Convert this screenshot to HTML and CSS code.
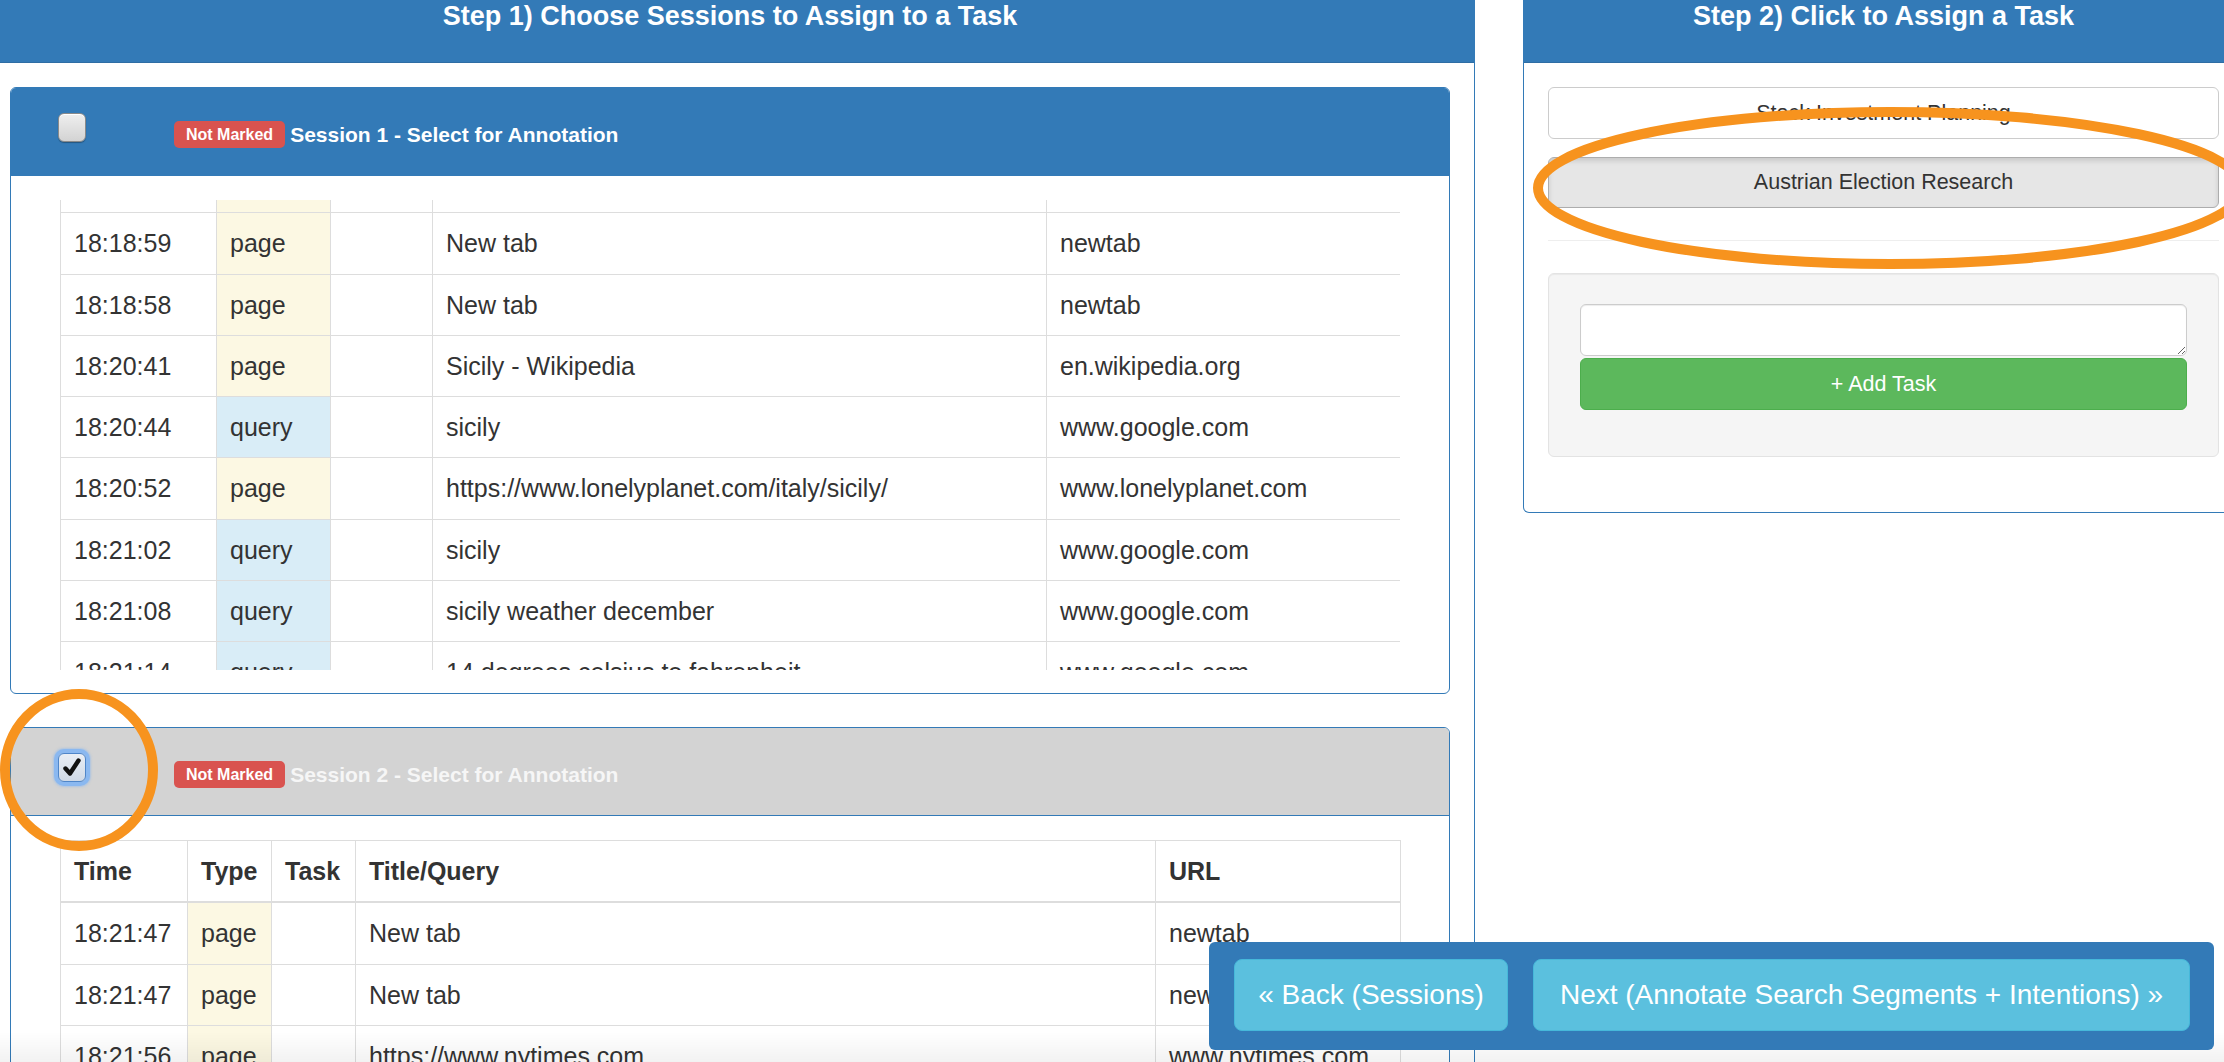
FILE: index.html
```html
<!DOCTYPE html>
<html lang="en">
<head>
<meta charset="utf-8">
<title>Assign Sessions to Tasks</title>
<link rel="stylesheet" href="styles.css">
</head>
<body>
<div class="row">
  <section class="step-panel step-left">
    <div class="step-heading"><h3>Step 1) Choose Sessions to Assign to a Task</h3></div>
    <div class="step-body">
      <div class="session">
        <div class="session-heading">
          <span class="cb"></span>
          <span class="label-group"><span class="badge">Not Marked</span><span class="session-title">Session 1 - Select for Annotation</span></span>
        </div>
        <div class="session-body">
          <div class="scroll-box">
            <table class="log log-s1">
              <colgroup><col class="s1-c1"><col class="s1-c2"><col class="s1-c3"><col class="s1-c4"><col class="s1-c5"></colgroup>
              <tbody>
                <tr><td>18:18:57</td><td class="page">page</td><td></td><td>New tab</td><td>newtab</td></tr>
                <tr><td>18:18:59</td><td class="page">page</td><td></td><td>New tab</td><td>newtab</td></tr>
                <tr><td>18:18:58</td><td class="page">page</td><td></td><td>New tab</td><td>newtab</td></tr>
                <tr><td>18:20:41</td><td class="page">page</td><td></td><td>Sicily - Wikipedia</td><td>en.wikipedia.org</td></tr>
                <tr><td>18:20:44</td><td class="query">query</td><td></td><td>sicily</td><td>www.google.com</td></tr>
                <tr><td>18:20:52</td><td class="page">page</td><td></td><td>https://www.lonelyplanet.com/italy/sicily/</td><td>www.lonelyplanet.com</td></tr>
                <tr><td>18:21:02</td><td class="query">query</td><td></td><td>sicily</td><td>www.google.com</td></tr>
                <tr><td>18:21:08</td><td class="query">query</td><td></td><td>sicily weather december</td><td>www.google.com</td></tr>
                <tr><td>18:21:14</td><td class="query">query</td><td></td><td>14 degrees celsius to fahrenheit</td><td>www.google.com</td></tr>
                <tr><td>18:21:20</td><td class="page">page</td><td></td><td>New tab</td><td>newtab</td></tr>
              </tbody>
            </table>
          </div>
        </div>
      </div>

      <div class="session session-selected">
        <div class="session-heading">
          <span class="cb cb-checked"><svg width="20" height="20" viewBox="0 0 20 20"><path d="M3.5 10.5 L8 15.5 L16.5 2.5" fill="none" stroke="#111" stroke-width="4.4" stroke-linecap="round" stroke-linejoin="round"/></svg></span>
          <span class="label-group"><span class="badge">Not Marked</span><span class="session-title">Session 2 - Select for Annotation</span></span>
        </div>
        <div class="session-body">
          <table class="log log-s2">
            <colgroup><col class="s2-c1"><col class="s2-c2"><col class="s2-c3"><col class="s2-c4"><col class="s2-c5"></colgroup>
            <thead>
              <tr><th>Time</th><th>Type</th><th>Task</th><th>Title/Query</th><th>URL</th></tr>
            </thead>
            <tbody>
              <tr><td>18:21:47</td><td class="page">page</td><td></td><td>New tab</td><td>newtab</td></tr>
              <tr><td>18:21:47</td><td class="page">page</td><td></td><td>New tab</td><td>newtab</td></tr>
              <tr><td>18:21:56</td><td class="page">page</td><td></td><td>https://www.nytimes.com</td><td>www.nytimes.com</td></tr>
              <tr><td>18:22:03</td><td class="page">page</td><td></td><td>New tab</td><td>newtab</td></tr>
            </tbody>
          </table>
        </div>
      </div>
    </div>
  </section>

  <section class="step-panel step-right">
    <div class="step-heading"><h3>Step 2) Click to Assign a Task</h3></div>
    <div class="step-body">
      <button class="task-btn">Stock Investment Planning</button>
      <button class="task-btn task-active">Austrian Election Research</button>
      <hr class="divider">
      <div class="well">
        <textarea class="task-input"></textarea>
        <button class="add-btn">+ Add Task</button>
      </div>
    </div>
  </section>
</div>

<div class="bottom-fade"></div>

<nav class="nav-bar">
  <button class="nav-btn nav-back">« Back (Sessions)</button>
  <button class="nav-btn nav-next">Next (Annotate Search Segments + Intentions) »</button>
</nav>

<svg class="annot" width="2224" height="1062" viewBox="0 0 2224 1062">
  <ellipse cx="1890" cy="188" rx="352" ry="76" fill="none" stroke="#f7931e" stroke-width="10"/>
  <ellipse cx="79" cy="770" rx="74" ry="76" fill="none" stroke="#f7931e" stroke-width="10"/>
</svg>
</body>
</html>
```

FILE: styles.css
```css
* { box-sizing: border-box; }

html, body {
  margin: 0;
  padding: 0;
}

body {
  width: 2224px;
  height: 1062px;
  overflow: hidden;
  position: relative;
  background: #fff;
  color: #333;
  font-family: "Liberation Sans", Arial, Helvetica, sans-serif;
}

.row {
  display: flex;
  align-items: flex-start;
  gap: 48px;
  margin-left: -15px;
  width: max-content;
}

.step-panel {
  flex: none;
  background: #fff;
  border: 1px solid #337ab7;
  border-top: none;
  border-radius: 0 0 6px 6px;
}

.step-left { width: 1490px; }
.step-right { width: 721px; }

.step-heading {
  height: 63px;
  background: #337ab7;
  border-bottom: 1px solid #2e6da4;
  color: #fff;
  text-align: center;
}

.step-heading h3 {
  margin: 0;
  padding-top: 1px;
  font-size: 27px;
  line-height: 30px;
  font-weight: bold;
}

.step-body {
  padding: 24px;
}

/* session panels */
.session {
  border: 1px solid #337ab7;
  border-radius: 6px;
  margin-bottom: 33px;
  overflow: hidden;
  background: #fff;
}

.session-heading {
  height: 88px;
  background: #337ab7;
  border-bottom: 1px solid #337ab7;
  display: flex;
  align-items: center;
  padding-left: 47px;
  color: #fff;
}

.session-selected .session-heading {
  background: #d3d3d3;
}

.session-selected .session-title {
  color: #f6f6f6;
}

.cb {
  flex: none;
  width: 28px;
  height: 29px;
  margin-right: 88px;
  margin-bottom: 8px;
  border-radius: 6px;
  border: 1px solid #8a8a8a;
  background: linear-gradient(#efefef, #d3d3d3);
  box-shadow: inset 0 1px 0 #fff, 0 1px 1px rgba(0, 0, 0, 0.3);
}

.cb-checked {
  display: flex;
  align-items: center;
  justify-content: center;
  background: linear-gradient(#e9eef5, #cfd9e6);
  border-color: #4f86c9;
  box-shadow: 0 0 0 4px #8ab8f0, 0 0 2px 5px rgba(138, 184, 240, 0.5);
}

.label-group {
  display: flex;
  align-items: center;
  margin-top: 6px;
}

.badge {
  background: #d9534f;
  color: #fff;
  font-size: 16px;
  font-weight: bold;
  line-height: 19px;
  padding: 4px 12px;
  border-radius: 5px;
}

.session-title {
  margin-left: 5px;
  font-size: 21px;
  font-weight: bold;
  color: #fff;
}

.session-body {
  padding: 24px 49px 23px 49px;
}

.scroll-box {
  height: 470px;
  overflow: hidden;
}

/* log tables */
.log {
  border-collapse: collapse;
  table-layout: fixed;
  width: 1340px;
  font-size: 25px;
}

.log-s1 { margin-top: -49px; }

.log td,
.log th {
  border: 1px solid #ddd;
  padding: 13px;
  line-height: 34.3px;
  text-align: left;
  vertical-align: top;
  white-space: nowrap;
  overflow: hidden;
}

.log th {
  font-weight: bold;
  border-bottom: 2px solid #ddd;
}

.log td.page { background: #fcf8e3; }
.log td.query { background: #d9edf7; }

.s1-c1 { width: 156px; }
.s1-c2 { width: 114px; }
.s1-c3 { width: 102px; }
.s1-c4 { width: 614px; }
.s1-c5 { width: 354px; }

.s2-c1 { width: 127px; }
.s2-c2 { width: 84px; }
.s2-c3 { width: 84px; }
.s2-c4 { width: 800px; }
.s2-c5 { width: 245px; }

/* right panel */
.task-btn {
  display: block;
  width: 100%;
  height: 52px;
  margin: 0 0 18px 0;
  border: 1px solid #ccc;
  border-radius: 6px;
  background: #fff;
  color: #333;
  font-family: inherit;
  font-size: 21.5px;
}

.task-active {
  height: 51px;
  margin-bottom: 0;
  background: #e6e6e6;
  border-color: #adadad;
  box-shadow: inset 0 3px 5px rgba(0, 0, 0, 0.125);
}

.divider {
  margin: 32px 0;
  border: 0;
  border-top: 1px solid #eee;
}

.well {
  background: #f5f5f5;
  border: 1px solid #e3e3e3;
  border-radius: 6px;
  padding: 30px 31px 46px 31px;
  margin-bottom: 31px;
  box-shadow: inset 0 1px 1px rgba(0, 0, 0, 0.05);
}

.task-input {
  display: block;
  width: 100%;
  height: 52px;
  margin: 0 0 2px 0;
  border: 1px solid #ccc;
  border-radius: 6px;
  background: #fff;
  box-shadow: inset 0 1px 1px rgba(0, 0, 0, 0.075);
  font-family: inherit;
  font-size: 21px;
}

.add-btn {
  display: block;
  width: 100%;
  height: 52px;
  border: 1px solid #4cae4c;
  border-radius: 6px;
  background: #5cb85c;
  color: #fff;
  font-family: inherit;
  font-size: 21.5px;
}

/* bottom overlay */
.bottom-fade {
  position: fixed;
  left: 0;
  right: 0;
  bottom: 0;
  height: 30px;
  background: linear-gradient(rgba(0, 0, 0, 0), rgba(0, 0, 0, 0.05));
  pointer-events: none;
}

.nav-bar {
  position: fixed;
  left: 1209px;
  top: 942px;
  width: 1005px;
  height: 108px;
  background: #337ab7;
  border-radius: 6px;
  padding: 17px 24px 19px 25px;
  display: flex;
  gap: 25px;
}

.nav-btn {
  height: 72px;
  padding: 0;
  border: 1px solid #46b8da;
  border-radius: 8px;
  background: #5bc0de;
  color: #fff;
  font-family: inherit;
  font-size: 28px;
  display: flex;
  align-items: center;
  justify-content: center;
}

.nav-back { width: 274px; }
.nav-next { width: 657px; }

.annot {
  position: absolute;
  left: 0;
  top: 0;
  pointer-events: none;
  z-index: 5;
}
```
